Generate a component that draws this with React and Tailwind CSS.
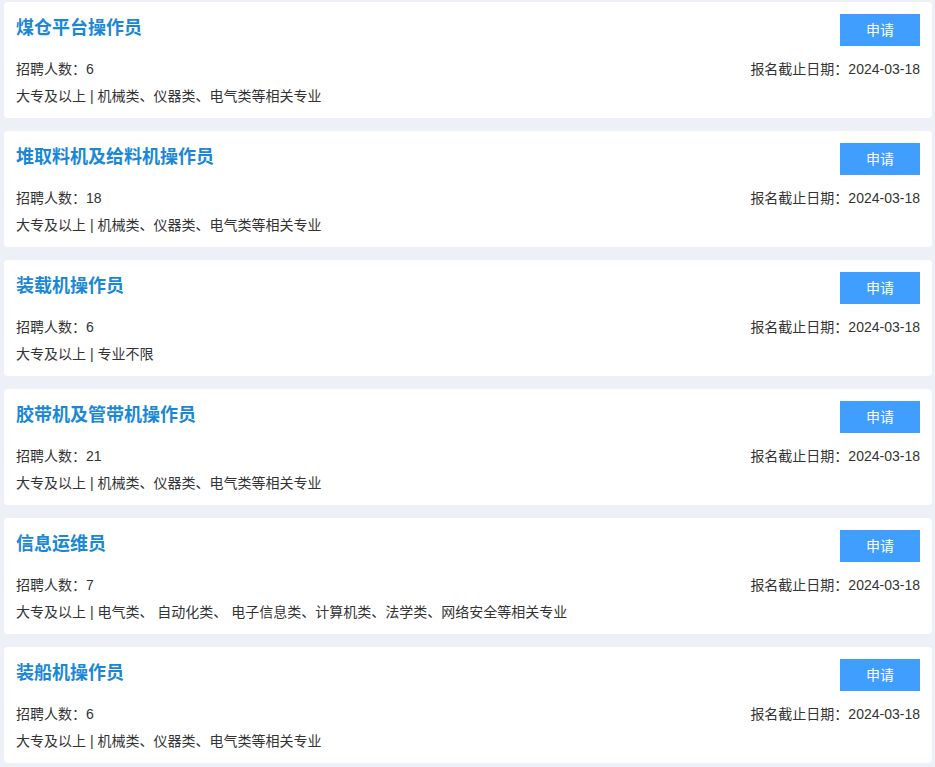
import React from "react";

const jobs = [
  { title: "煤仓平台操作员", count: 6, req: "大专及以上 | 机械类、仪器类、电气类等相关专业" },
  { title: "堆取料机及给料机操作员", count: 18, req: "大专及以上 | 机械类、仪器类、电气类等相关专业" },
  { title: "装载机操作员", count: 6, req: "大专及以上 | 专业不限" },
  { title: "胶带机及管带机操作员", count: 21, req: "大专及以上 | 机械类、仪器类、电气类等相关专业" },
  { title: "信息运维员", count: 7, req: "大专及以上 | 电气类、 自动化类、 电子信息类、计算机类、法学类、网络安全等相关专业" },
  { title: "装船机操作员", count: 6, req: "大专及以上 | 机械类、仪器类、电气类等相关专业" },
];

const JobCard = ({ job }) => (
  <div className="bg-white rounded p-3">
    {/* title + apply */}
    <div className="flex items-start justify-between h-8">
      <h3 className="text-[18px] leading-[28px] font-bold text-[#1a88d6]">{job.title}</h3>
      <button className="w-20 h-8 bg-[#409eff] text-white text-sm">申请</button>
    </div>
    <div className="mt-[13px] flex justify-between text-sm leading-5 text-[#333]">
      <span>招聘人数：{job.count}</span>
      <span>报名截止日期：2024-03-18</span>
    </div>
    <div className="mt-[7px] text-sm leading-5 text-[#333]">{job.req}</div>
  </div>
);

export default function App() {
  return (
    <div
      className="min-h-screen bg-[#edf0f6] pt-[2px] pl-1 w-[935px]"
      style={{ fontFamily: '"Liberation Sans", "Noto Sans CJK SC", sans-serif' }}
    >
      <div className="w-[928px] flex flex-col gap-[13px]">
        {jobs.map((job, i) => (
          <JobCard key={i} job={job} />
        ))}
      </div>
    </div>
  );
}
